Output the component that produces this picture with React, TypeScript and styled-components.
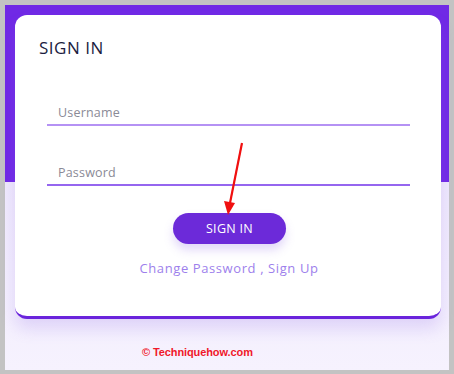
import React from "react";
import styled, { createGlobalStyle } from "styled-components";

const Global = createGlobalStyle`
  html, body { margin: 0; padding: 0; background: #c3c3c3; }
  body { font-family: "Inter", "Liberation Sans", sans-serif; }
`;

const Frame = styled.div`
  width: 454px;
  height: 374px;
  box-sizing: border-box;
  padding: 5px 5px 4px 5px;
  background: #c3c3c3;
`;

const Page = styled.div`
  position: relative;
  height: 100%;
  box-sizing: border-box;
  padding: 10px 8px 0 10px;
  background: linear-gradient(#7029e5 0, #7029e5 177px, #efe9fc 177px, #f6f2fe 100%);
  display: flex;
  flex-direction: column;
`;

const Card = styled.div`
  background: #fff;
  border-radius: 12px;
  border-bottom: 3px solid #6a24dc;
  height: 304px;
  box-sizing: border-box;
  padding: 23px 31px 0 32px;
  box-shadow: 0 10px 16px rgba(140, 100, 230, 0.2);
  display: flex;
  flex-direction: column;
`;

const Title = styled.h1`
  margin: 0 0 0 -8px;
  font-family: "Open Sans", sans-serif;
  font-weight: 400;
  font-size: 17px;
  line-height: 20px;
  color: #1b1d3f;
  letter-spacing: 0.5px;
`;

const Field = styled.div<{ $line: string; $gap: number }>`
  margin-top: ${(p) => p.$gap}px;
  height: 24px;
  border-bottom: 2px solid ${(p) => p.$line};
  display: flex;
  align-items: center;
  padding-left: 11px;
  font-family: "Open Sans", sans-serif;
  font-size: 12.5px;
  color: #8a8a96;
  letter-spacing: 0.2px;
`;

const Button = styled.button`
  align-self: center;
  margin: 27px 0 0 2px;
  width: 113px;
  height: 31px;
  border: none;
  border-radius: 16px;
  background: #6c2ad9;
  color: #fff;
  font-family: "Open Sans", sans-serif;
  font-size: 12.5px;
  letter-spacing: 0.3px;
  box-shadow: 0 6px 10px rgba(140, 100, 230, 0.25);
  padding: 0;
`;

const Links = styled.div`
  margin: 16px 0 0 1px;
  text-align: center;
  font-family: "Open Sans", sans-serif;
  font-size: 13px;
  line-height: 16px;
  letter-spacing: 0.6px;
  color: #9d7fec;
`;

const Copy = styled.div`
  margin: 27px 0 0 127px;
  font-family: "Liberation Sans", sans-serif;
  font-weight: 700;
  font-size: 11px;
  letter-spacing: -0.1px;
  color: #f0182a;
`;

const Arrow = styled.svg`
  position: absolute;
  left: 0;
  top: 0;
  pointer-events: none;
`;

export default function App() {
  return (
    <>
      <Global />
      <Frame>
        <Page>
          <Card>
            <Title>SIGN IN</Title>
            <Field $line="#b592f4" $gap={42}>Username</Field>
            <Field $line="#9566ef" $gap={34}>Password</Field>
            <Button>SIGN IN</Button>
            <Links>Change Password , Sign Up</Links>
          </Card>
          <Copy>© Techniquehow.com</Copy>
          <Arrow width="444" height="365" viewBox="0 0 444 365">
            <line x1="237" y1="138" x2="225" y2="198" stroke="#f01010" strokeWidth="2.2" />
            <polygon points="223,210 219,196 230,198" fill="#f01010" />
          </Arrow>
        </Page>
      </Frame>
    </>
  );
}
